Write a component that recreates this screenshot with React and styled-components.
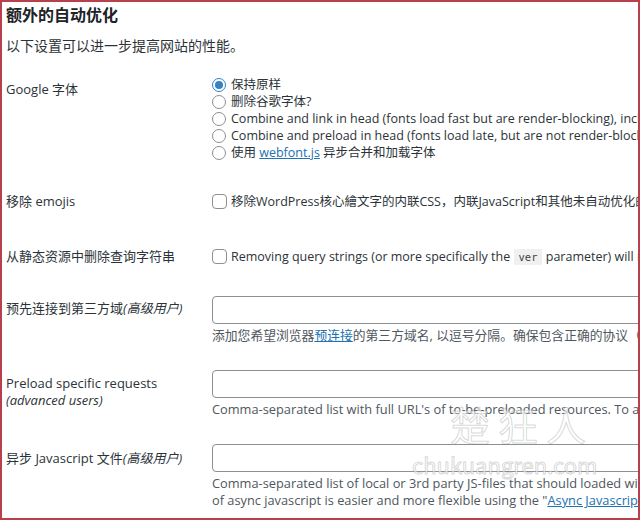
import React from "react";
import styled, { createGlobalStyle } from "styled-components";

const Global = createGlobalStyle`
  html, body { margin: 0; padding: 0; background: #fff; }
  * { box-sizing: border-box; }
`;

const FONT = `"Open Sans", "Noto Sans CJK SC", sans-serif`;

const Frame = styled.div`
  position: relative;
  width: 640px;
  height: 520px;
  border: 2px solid #b8404c;
  overflow: hidden;
  background: #fff;
  font-family: ${FONT};
  color: #1d2327;
  padding: 3px 0 0 4px;
`;

const Title = styled.h2`
  margin: 0;
  font-size: 16px;
  line-height: 20px;
  font-weight: 700;
  white-space: nowrap;
`;

const Intro = styled.p`
  margin: 11px 0 0;
  font-size: 14px;
  line-height: 20px;
  color: #2c3338;
  white-space: nowrap;
`;

const Row = styled.div`
  display: grid;
  grid-template-columns: 206px 1fr;
  margin-top: ${(p) => p.$top}px;
`;

const Label = styled.div`
  font-size: 13px;
  line-height: 17px;
  padding-top: ${(p) => p.$pad || 0}px;
  color: #2c3338;
  white-space: nowrap;
  em { font-style: italic; }
`;

const Control = styled.div`
  display: flex;
  flex-direction: column;
  min-width: 0;
`;

const Option = styled.label`
  display: flex;
  align-items: center;
  gap: ${(p) => p.$gap || 5}px;
  height: 17px;
  font-size: 12.5px;
  line-height: 17px;
  white-space: nowrap;
  color: #2c3338;
`;

const Text = styled.span`
  white-space: nowrap;
`;

const Radio = styled.span`
  flex: none;
  width: 14px;
  height: 14px;
  border-radius: 50%;
  border: 1px solid ${(p) => (p.$on ? "#3582c4" : "#8c8f94")};
  display: flex;
  align-items: center;
  justify-content: center;
  background: #fff;
  &::after {
    content: "";
    width: 8px;
    height: 8px;
    border-radius: 50%;
    background: #3582c4;
    display: ${(p) => (p.$on ? "block" : "none")};
  }
`;

const Check = styled.span`
  flex: none;
  width: 15px;
  height: 15px;
  border-radius: 4px;
  border: 1px solid #8c8f94;
  background: #fff;
`;

const Link = styled.a`
  color: #2271b1;
  text-decoration: underline;
`;

const Code = styled.code`
  font-family: "DejaVu Sans Mono", monospace;
  font-size: 10.5px;
  line-height: 14px;
  background: #f0f0f1;
  color: #3c434a;
  padding: 2px 5px;
`;

const Input = styled.div`
  width: 520px;
  height: 28px;
  border: 1px solid #8c8f94;
  border-radius: 4px;
  background: #fff;
`;

const Desc = styled.p`
  margin: 3px 0 0;
  font-size: 12.8px;
  line-height: 17px;
  color: #50575e;
  white-space: nowrap;
`;

const Watermark = styled.div`
  position: absolute;
  left: ${(p) => p.$x}px;
  top: ${(p) => p.$y}px;
  font-size: ${(p) => p.$size}px;
  letter-spacing: ${(p) => p.$ls || 0}px;
  font-family: "Noto Sans CJK SC", "DejaVu Sans", sans-serif;
  color: rgba(255, 255, 255, 0.6);
  -webkit-text-stroke: 1px rgba(120, 120, 120, 0.3);
  pointer-events: none;
  white-space: nowrap;
`;

export default function App() {
  return (
    <>
      <Global />
      <Frame>
        <Title>额外的自动优化</Title>
        <Intro>以下设置可以进一步提高网站的性能。</Intro>

        <Row $top={20}>
          <Label $pad={5}>Google 字体</Label>
          <Control>
            <Option><Radio $on /><Text>保持原样</Text></Option>
            <Option><Radio /><Text>删除谷歌字体?</Text></Option>
            <Option><Radio /><Text>Combine and link in head (fonts load fast but are render-blocking), includes display:swap.</Text></Option>
            <Option><Radio /><Text>Combine and preload in head (fonts load late, but are not render-blocking), includes display:swap.</Text></Option>
            <Option><Radio /><Text>使用 <Link>webfont.js</Link> 异步合并和加载字体</Text></Option>
          </Control>
        </Row>

        <Row $top={32}>
          <Label>移除 emojis</Label>
          <Control>
            <Option $gap={4}><Check /><Text>移除WordPress核心繪文字的内联CSS，内联JavaScript和其他未自动优化的外部JavaScript。</Text></Option>
          </Control>
        </Row>

        <Row $top={38}>
          <Label>从静态资源中删除查询字符串</Label>
          <Control>
            <Option $gap={4}><Check /><Text>Removing query strings (or more specifically the <Code>ver</Code> parameter) will not improve load time, but might improve performance scores.</Text></Option>
          </Control>
        </Row>

        <Row $top={31}>
          <Label $pad={4}>预先连接到第三方域<em>(高级用户)</em></Label>
          <Control>
            <Input />
            <Desc>添加您希望浏览器<Link>预连接</Link>的第三方域名, 以逗号分隔。确保包含正确的协议（http 或 https）。</Desc>
          </Control>
        </Row>

        <Row $top={26}>
          <Label $pad={5}>Preload specific requests<br /><em>(advanced users)</em></Label>
          <Control>
            <Input />
            <Desc>Comma-separated list with full URL's of to-be-preloaded resources. To avoid erroneous preloads it is advised to only use this for resources loaded from the same domain.</Desc>
          </Control>
        </Row>

        <Row $top={26}>
          <Label $pad={6}>异步 Javascript 文件<em>(高级用户)</em></Label>
          <Control>
            <Input />
            <Desc>
              Comma-separated list of local or 3rd party JS-files that should loaded with the async flag. JS-files from your own site will be automatically excluded if added here. Configuration
              <br />
              of async javascript is easier and more flexible using the "<Link>Async Javascript</Link>" plugin.
            </Desc>
          </Control>
        </Row>

        <Watermark $x={448} $y={393} $size={40} $ls={8}>楚狂人</Watermark>
        <Watermark $x={410} $y={446} $size={22}>chukuangren.com</Watermark>
      </Frame>
    </>
  );
}
